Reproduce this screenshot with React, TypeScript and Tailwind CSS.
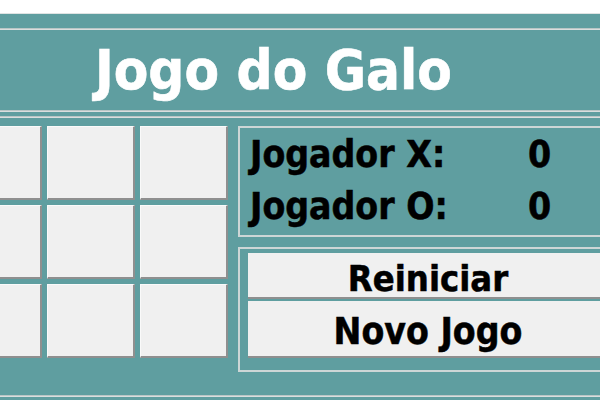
import React from "react";

const FONT = "font-['DejaVu_Sans_Condensed','DejaVu_Sans',sans-serif] [font-stretch:condensed] font-bold";

function Line() {
  return (
    <div className="h-[2px] w-full">
      <div className="h-px bg-[#b9c6c6]" />
      <div className="h-px bg-[#d9dede]" />
    </div>
  );
}

function Cell() {
  return (
    <div className="bg-[#f0f0f0] border-t border-l border-t-[#fafafa] border-l-[#fafafa] border-r-2 border-b-2 border-r-[#8f8f8f] border-b-[#8f8f8f]" />
  );
}

export default function App() {
  const cells = Array.from({ length: 9 });
  return (
    <div className={`w-[600px] h-[400px] overflow-hidden bg-white ${FONT}`}>
      <div className="h-[13px] bg-white" />
      <div className="h-[387px] bg-[#5f9ea0] border-t border-[#dfe3e3] flex flex-col">
        <div className="h-[14px]" />
        <Line />
        <div className="h-[80px] flex items-center pl-[95px]">
          <span className="text-white text-[56px] leading-none [-webkit-text-stroke:0.6px_white]">Jogo do Galo</span>
        </div>
        <Line />
        <div className="h-[4px]" />
        <Line />
        <div className="flex pt-[8px] h-[277px]">
          <div className="ml-[-46px] grid grid-cols-[88px_88px_88px] grid-rows-[74px_74px_74px] gap-[5px] shrink-0">
            {cells.map((_, i) => (
              <Cell key={i} />
            ))}
          </div>
          <div className="ml-[10px] w-[380px] shrink-0 flex flex-col gap-[10px]">
            <div className="h-[111px] border-2 border-[#cdd6d6] pl-[10px] pt-[6px] flex flex-col gap-[10px] text-black text-[37px] leading-[42px] [-webkit-text-stroke:0.5px_black]">
              <div className="flex">
                <span className="w-[278px]">Jogador X:</span>
                <span>0</span>
              </div>
              <div className="flex">
                <span className="w-[278px]">Jogador O:</span>
                <span>0</span>
              </div>
            </div>
            <div className="h-[125px] border-2 border-[#cdd6d6] pl-[8px] pt-[4px] flex flex-col gap-[2px] [-webkit-text-stroke:0.5px_black]">
              <div className="w-[362px] h-[46px] pt-[8px] bg-[#f0f0f0] border-r-2 border-b-2 border-[#8f8f8f] flex items-center justify-center text-black text-[36px] leading-none">
                Reiniciar
              </div>
              <div className="w-[362px] h-[57px] pt-[5px] bg-[#f0f0f0] border-r-2 border-b-2 border-[#8f8f8f] flex items-center justify-center text-black text-[37px] leading-none">
                Novo Jogo
              </div>
            </div>
          </div>
        </div>
        <Line />
      </div>
    </div>
  );
}
